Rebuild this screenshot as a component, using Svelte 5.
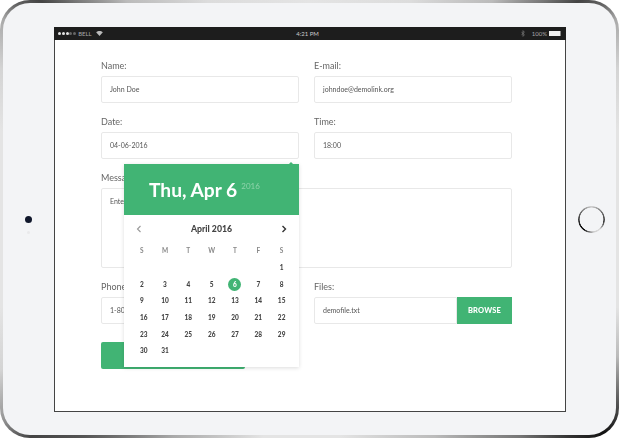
<script lang="ts">
  const weekdays = ["S", "M", "T", "W", "T", "F", "S"];
  const days = Array.from({ length: 31 }, (_, i) => i + 1);
  const blanks = Array.from({ length: 6 });
  const selectedDay = 6;
</script>

<div class="device">
  <div class="shell">
    <div class="bezel left">
      <span class="camera"></span>
      <span class="sensor"></span>
    </div>

    <div class="screen">
      <div class="status">
        <div class="status-side">
          <span class="signal">
            <i></i><i></i><i></i><i class="off"></i><i class="off"></i>
          </span>
          <span>BELL</span>
          <svg class="wifi" width="7" height="5" viewBox="0 0 8 6">
            <path d="M0 1.6C2.2-.5 5.8-.5 8 1.6L4 6Z" fill="#bbb" />
          </svg>
        </div>
        <span class="clock">4:21 PM</span>
        <div class="status-side end">
          <svg width="4" height="7" viewBox="0 0 4 7">
            <path d="M.4 1.8 3.4 4.9 2 6.4V.6L3.4 2.1.4 5.2" fill="none" stroke="#888" stroke-width=".6" />
          </svg>
          <span class="percent">100%</span>
          <span class="battery"></span>
        </div>
      </div>

      <form class="form">
        <div class="field">
          <label for="name">Name:</label>
          <div class="input" id="name">John Doe</div>
        </div>
        <div class="field">
          <label for="email">E-mail:</label>
          <div class="input" id="email">johndoe@demolink.org</div>
        </div>
        <div class="field">
          <label for="date">Date:</label>
          <div class="input" id="date">04-06-2016</div>
        </div>
        <div class="field">
          <label for="time">Time:</label>
          <div class="input" id="time">18:00</div>
        </div>
        <div class="field wide">
          <label for="message">Message:</label>
          <div class="input area" id="message">Enter your message...</div>
        </div>
        <div class="field">
          <label for="phone">Phone:</label>
          <div class="input" id="phone">1-800-1234-567</div>
        </div>
        <div class="field">
          <label for="files">Files:</label>
          <div class="file-row">
            <div class="input" id="files">demofile.txt</div>
            <span class="browse">BROWSE</span>
          </div>
        </div>
        <div class="submit">SUBMIT</div>

        <div class="picker">
          <span class="caret"></span>
          <div class="picker-head">
            <span class="picker-date">Thu, Apr 6</span>
            <span class="picker-year">2016</span>
          </div>
          <div class="month">
            <svg width="6" height="8" viewBox="0 0 6 8">
              <path d="M4.5 1 1.5 4l3 3" fill="none" stroke="#999" stroke-width="1.1" />
            </svg>
            <span>April 2016</span>
            <svg width="6" height="8" viewBox="0 0 6 8">
              <path d="M1.5 1l3 3-3 3" fill="none" stroke="#333" stroke-width="1.4" />
            </svg>
          </div>
          <div class="grid names">
            {#each weekdays as d}
              <span>{d}</span>
            {/each}
          </div>
          <div class="grid days">
            {#each blanks as _}
              <span></span>
            {/each}
            {#each days as d (d)}
              <span class="day"><b class:selected={d === selectedDay}>{d}</b></span>
            {/each}
          </div>
        </div>
      </form>
    </div>

    <div class="bezel right">
      <span class="home"></span>
    </div>
  </div>
</div>

<style>
  :global(body) {
    background: #fff;
    font-family: Lato, "Liberation Sans", sans-serif;
  }

  .device {
    width: 619px;
    height: 438px;
    padding: 3px;
    box-sizing: border-box;
    border-radius: 30px;
    /* the metal edge: dark only right at the corners, pale along the sides */
    background: conic-gradient(
      #e4e4e4 0deg,
      #dcdcdc 25deg,
      #bbb 40deg,
      #777 47deg,
      #444 51deg,
      #666 54deg,
      #aaa 57deg,
      #d4d4d4 64deg,
      #e4e4e4 74deg,
      #e4e4e4 106deg,
      #bbb 114deg,
      #444 122deg,
      #111 126deg,
      #333 130deg,
      #777 136deg,
      #bbb 150deg,
      #e4e4e4 172deg,
      #e4e4e4 192deg,
      #aaa 212deg,
      #555 226deg,
      #444 232deg,
      #999 237deg,
      #d4d4d4 244deg,
      #e4e4e4 254deg,
      #e4e4e4 286deg,
      #d4d4d4 296deg,
      #aaa 303deg,
      #666 306deg,
      #444 309deg,
      #777 313deg,
      #bbb 320deg,
      #dcdcdc 335deg,
      #e4e4e4 360deg
    );
  }

  .shell {
    display: flex;
    height: 432px;
    padding-top: 24px;
    box-sizing: border-box;
    border-radius: 27px;
    background: #f3f4f6;
  }

  .bezel {
    display: flex;
    flex-direction: column;
    align-items: center;
    justify-content: center;
    height: 385px;
    flex: none;
  }

  .bezel.left {
    width: 51px;
    gap: 8px;
  }

  .camera {
    width: 7px;
    height: 7px;
    margin-top: 11px;
    border-radius: 50%;
    background: #10172b;
  }

  .sensor {
    width: 3px;
    height: 3px;
    border-radius: 50%;
    background: #e9e9eb;
  }

  .bezel.right {
    flex: 1;
    padding-left: 1px;
  }

  .home {
    width: 27px;
    height: 27px;
    border-radius: 50%;
    background: conic-gradient(#ccc, #666 60deg, #333 100deg, #ddd 140deg, #ccc 170deg, #000 220deg, #333 270deg, #888 320deg, #ccc);
    mask: radial-gradient(circle, transparent 11.6px, #000 12.2px);
  }

  .screen {
    width: 512px;
    height: 385px;
    flex: none;
    box-sizing: border-box;
    background: #fff;
    border: 1px solid #444;
    border-top: none;
  }

  .status {
    display: flex;
    align-items: center;
    justify-content: space-between;
    height: 13px;
    padding: 0 5px 0 4px;
    margin: 0 -1px;
    background: #1d1d1d;
    color: #a8a8a8;
    font-size: 6px;
    line-height: 13px;
  }

  .status-side {
    display: flex;
    align-items: center;
    gap: 2px;
    width: 120px;
  }

  .status-side.end {
    justify-content: flex-end;
    width: 124px;
  }

  .percent {
    margin: 0 0 0 5px;
  }

  .signal {
    display: flex;
    gap: 0.8px;
  }

  .signal i {
    width: 3px;
    height: 3px;
    border-radius: 50%;
    background: #e4e4e4;
  }

  .signal i.off {
    background: #666;
  }

  .wifi {
    margin-left: 2px;
  }

  .clock {
    color: #ccc;
  }

  .battery {
    width: 11px;
    height: 5px;
    background: #f0f0f0;
    border-right: 1px solid #888;
  }

  .form {
    position: relative;
    display: grid;
    grid-template-columns: 198px 198px;
    column-gap: 15px;
    row-gap: 12px;
    padding: 19px 46px 0;
    align-content: start;
    will-change: transform;
  }

  .field {
    display: flex;
    flex-direction: column;
  }

  .wide {
    grid-column: 1 / -1;
  }

  label {
    height: 17px;
    color: #666;
    font-size: 9px;
    line-height: 13px;
  }

  .input {
    height: 27px;
    box-sizing: border-box;
    padding: 0 8px;
    border: 1px solid #e8e8e8;
    border-radius: 2px;
    background: #fff;
    color: #555;
    font-size: 7px;
    line-height: 25px;
  }

  .area {
    height: 80px;
  }

  .file-row {
    display: flex;
  }

  .file-row .input {
    flex: 1;
    border-radius: 2px 0 0 2px;
  }

  .browse {
    width: 55px;
    background: #41b474;
    color: #fff;
    font-size: 7.5px;
    font-weight: 900;
    letter-spacing: 0.2px;
    line-height: 27px;
    text-align: center;
  }

  .submit {
    width: 144px;
    height: 27px;
    margin-top: 6px;
    border-radius: 2px;
    background: #41b474;
    color: #fff;
    font-size: 9px;
    font-weight: 700;
    line-height: 27px;
    text-align: center;
  }

  .picker {
    position: absolute;
    left: 69px;
    top: 124px;
    width: 175px;
    height: 203px;
    background: #fff;
    box-shadow: 0 1px 4px rgba(0, 0, 0, 0.14);
  }

  .caret {
    position: absolute;
    right: 6px;
    top: -2px;
    border: 2px solid transparent;
    border-top: none;
    border-bottom-color: #41b474;
  }

  .picker-head {
    display: flex;
    align-items: flex-start;
    gap: 4px;
    height: 51px;
    padding: 15px 0 0 25px;
    box-sizing: border-box;
    background: #41b474;
    color: #fff;
  }

  .picker-date {
    font-size: 19.2px;
    font-weight: 700;
    line-height: 22px;
  }

  .picker-year {
    color: #8fd3ab;
    font-size: 8px;
    line-height: 14px;
  }

  .month {
    display: flex;
    align-items: center;
    justify-content: space-between;
    height: 27px;
    padding: 0 12px;
    color: #444;
    font-size: 8.7px;
    font-weight: 900;
  }

  .grid {
    display: grid;
    grid-template-columns: repeat(7, 23.33px);
    padding: 0 6px;
    text-align: center;
  }

  .names {
    height: 18px;
    color: #888;
    font-size: 6.5px;
    font-weight: 700;
    line-height: 18px;
  }

  .days {
    grid-auto-rows: 16.6px;
    color: #444;
    font-size: 6.5px;
    line-height: 16px;
  }

  .day {
    display: flex;
    align-items: center;
    justify-content: center;
  }

  .day:nth-child(7n + 1) {
    justify-content: flex-start;
    padding-left: 10px;
  }

  .day b {
    font-weight: 900;
  }

  .day b.selected {
    width: 13px;
    height: 13px;
    border-radius: 50%;
    background: #41b474;
    color: #fff;
    line-height: 13px;
  }
</style>
